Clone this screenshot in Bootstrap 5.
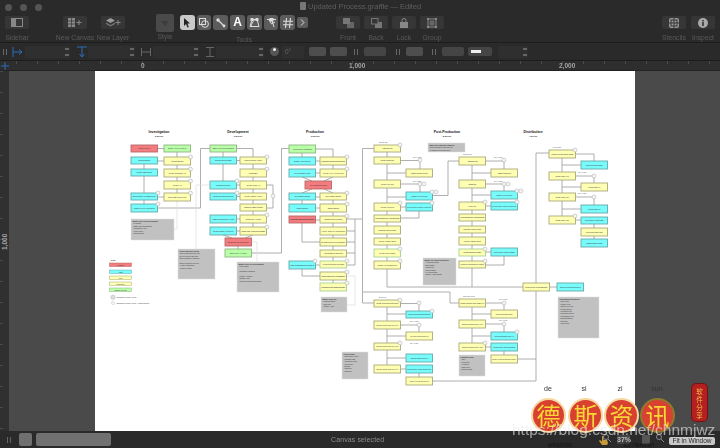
<!DOCTYPE html>
<html>
<head>
  <title>Updated Process.graffle</title>
  <link rel="stylesheet" href="https://cdn.jsdelivr.net/npm/bootstrap@5.3.0/dist/css/bootstrap.min.css">
  <style>
    html, body { height: 448px; overflow: hidden; background: #2a2a2a; }
    body { font-family: "Liberation Sans", Arial, sans-serif; }
    .app-shell { width: 720px; height: 448px; position: relative; filter: blur(.45px); }

    .title-bar { height: 14px; padding-left: 5px; position: relative; }
    .light { width: 7px; height: 7px; border-radius: 50%; background: #555; }
    .doc-title { position: absolute; left: 300px; top: 0; font-size: 7.5px; line-height: 13px; color: #5f5f5f; }
    .doc-icon { width: 6px; height: 8px; background: #777; border-radius: 1px; margin-right: 2px; display: inline-block; vertical-align: -1px; }

    .tool-bar { height: 29px; border-bottom: 1px solid #1d1d1d; position: relative; padding-left: 5px; }
    .tool-group { width: 24px; position: relative; display: flex; flex-direction: column; align-items: center; }
    .tool-btn { width: 24px; height: 13px; margin-top: 2px; background: #363636; border-radius: 2px; display: flex; align-items: center; justify-content: center; flex: none; }
    .tool-name { font-size: 6.8px; line-height: 7px; color: #5a5a5a; margin-top: 5px; white-space: nowrap; text-align: center; width: max-content; flex: none; }
    .style-well { width: 18px; height: 18px; background: #4a4a4a; border-radius: 2px; margin-top: 0; flex: none; }
    .pick-btn { width: 15px; height: 15px; border-radius: 3px; background: #5c5c5c; display: flex; align-items: center; justify-content: center; }
    .pick-btn.on { background: #c9c9c9; }
    .more-btn { width: 11px; height: 11px; border-radius: 2px; background: #5c5c5c; display: flex; align-items: center; justify-content: center; }

    .insp-bar { height: 18px; border-bottom: 1px solid #1d1d1d; padding-left: 3px; }
    .grip { width: 4px; height: 6px; border-left: 1px solid #666; border-right: 1px solid #666; }
    .insp-field { height: 12px; background: #2f2f2f; border-radius: 1px; position: relative; }
    .stepper { position: absolute; right: 1px; top: 2px; width: 4px; height: 8px; border-top: 2px solid #666; border-bottom: 2px solid #666; }
    .mini-btn { width: 17px; height: 9px; border-radius: 2px; background: #4e4e4e; }
    .mini-sel { width: 22px; height: 9px; border-radius: 2px; background: #454545; }

    .ruler-top { height: 10px; background: #2e2e2e; border-bottom: 1px solid #222; position: relative;
      background-image: repeating-linear-gradient(90deg, #4b4b4b 0 1px, transparent 1px 21px); background-position: 16px 0; background-size: 100% 3px; background-repeat: no-repeat; }
    .ruler-num { position: absolute; top: 1px; font-size: 6.5px; line-height: 8px; font-weight: 700; color: #a5a5a5; }
    .ruler-cross { position: absolute; left: 1px; top: 1px; width: 8px; height: 8px; }

    .work-area { height: 360px; background: #4a4a4a; }
    .ruler-left { width: 9px; background: #303030; position: relative;
      background-image: repeating-linear-gradient(180deg, #4b4b4b 0 1px, transparent 1px 21px); background-size: 3px 100%; background-repeat: no-repeat; }
    .ruler-side { position: absolute; left: -4px; top: 166px; font-size: 6.5px; font-weight: 700; color: #a5a5a5; transform: rotate(-90deg); width: 18px; text-align: center; }
    .paper { width: 540px; height: 360px; background: #fff; margin-left: 86px; }
    .paper svg { display: block; }
    .node-text { font-size: 1.9px; fill: #3a3a3a; text-anchor: middle; }
    .head-text { font-size: 3.4px; font-weight: 700; fill: #111; text-anchor: middle; }
    .sub-text { font-size: 2.2px; font-weight: 700; fill: #333; text-anchor: middle; }
    .note-text { font-size: 1.8px; fill: #333; }

    .status-bar { height: 17px; position: relative; padding-left: 7px; }
    .status-sq { width: 13px; height: 13px; background: #707070; border-radius: 2px; }
    .status-wide { width: 75px; height: 13px; background: #707070; border-radius: 2px; }
    .status-text { position: absolute; left: 331px; top: 3px; font-size: 7px; line-height: 11px; color: #8d8d8d; letter-spacing: .1px; }
    .zoom-box { position: absolute; left: 617px; top: 4px; width: 13px; height: 9px; background: #444; color: #bbb; font-size: 7px; line-height: 9px; text-align: center; font-weight: 700; }
    .zoom-drop { position: absolute; left: 642px; top: 4px; width: 8px; height: 9px; background: #555; border-radius: 1px; }
    .fit-btn { position: absolute; left: 669px; top: 6px; width: 46px; height: 8px; background: #c9c9c9; color: #2a2a2a; border-radius: 2px; font-size: 6.5px; line-height: 8px; text-align: center; }
    .tiny-dark { position: absolute; top: 12px; font-size: 4px; line-height: 4px; color: #111; font-family: "Noto Sans CJK SC", sans-serif; }

    .pin-word { position: absolute; top: 384px; font-size: 7px; line-height: 9px; color: #333; width: 30px; text-align: center; }
    .seal-ball { position: absolute; top: 398px; width: 35px; height: 35px; border-radius: 50%; background: #d8412f; border: 2px solid #f7d9a0;
      color: #f9d736; font-family: "Noto Sans CJK SC", sans-serif; font-size: 24px; line-height: 30px; text-align: center; }
    .seal-ball.dim { border-color: #8f7a2e; }
    .seal-tag { position: absolute; left: 691px; top: 383px; width: 17px; height: 39px; background: #b3201f; border: 1px solid #6d1514; border-radius: 5px;
      color: #f2c04a; font-family: "Noto Sans CJK SC", sans-serif; font-size: 6.5px; line-height: 8px; text-align: center; padding-top: 3px; }
    .water-url { position: absolute; left: 512px; top: 420px; font-size: 15.5px; line-height: 20px; color: rgba(235,235,235,.62); white-space: nowrap; }

    /* toolbar and strip spacing */
    .ms-new-canvas { margin-left: 34px; } .ms-new-layer { margin-left: 14px; }
    .ms-style { margin-left: 31px; width: 18px; }
    .ms-style .tight-name { margin-top: 1px; }
    .tools-wrap { margin-left: 6px; width: 128px; padding-top: 1px; }
    .tools-row { gap: 2px; }
    .tools-name { width: 128px; margin-top: 6px; }
    .glyph-a { font-size: 12px; line-height: 15px; }
    .ms-front { margin-left: 28px; } .ms-small { margin-left: 4px; }
    .ms-stencils { margin-left: 218px; } .ms-inspect { margin-left: 5px; }
    .insp-i1 { margin-left: 5px; } .f1 { width: 45px; margin-left: 2px; }
    .insp-i2 { margin-left: 7px; } .f2 { width: 47px; margin-left: 1px; }
    .insp-i3 { margin-left: 6px; } .f3 { width: 46px; margin-left: 2px; }
    .insp-i4 { margin-left: 7px; } .f4 { width: 48px; margin-left: 2px; }
    .insp-i5 { margin-left: 6px; } .f5 { width: 22px; margin-left: 3px; }
    .deg { display: block; font-size: 6.5px; line-height: 12px; padding-left: 3px; color: #666; }
    .m1 { margin-left: 5px; } .m2 { margin-left: 4px; }
    .g2 { margin-left: 7px; } .s1 { margin-left: 6px; }
    .g3 { margin-left: 10px; } .m3 { margin-left: 6px; }
    .g4 { margin-left: 9px; } .s2 { margin-left: 6px; }
    .s3 { margin-left: 4px; width: 24px; padding-left: 3px; }
    .line-sample { width: 10px; height: 3px; background: #eee; }
    .f6 { width: 30px; margin-left: 6px; }
    .num-a { left: 141px; } .num-b { left: 349px; } .num-c { left: 559px; }
    .hand-ico { position: absolute; left: 599px; top: 5px; }
    .lens-a { position: absolute; left: 603px; top: 3px; }
    .lens-b { position: absolute; left: 656px; top: 3px; }
    .tiny-1 { left: 548px; } .tiny-2 { left: 623px; }
    .p1 { left: 533px; } .p2 { left: 569px; } .p3 { left: 605px; } .p4 { left: 642px; }
    .b1 { left: 531px; } .b2 { left: 568px; } .b3 { left: 604px; } .b4 { left: 640px; }
  </style>
</head>
<body>
  <div class="app-shell">

    <!-- window title -->
    <div class="title-bar d-flex align-items-center gap-2">
      <span class="light"></span><span class="light"></span><span class="light"></span>
      <div class="doc-title"><span class="doc-icon"></span>Updated Process.graffle — Edited</div>
    </div>

    <!-- main toolbar -->
    <div class="tool-bar d-flex">
      <div class="tool-group">
        <div class="tool-btn"><svg width="12" height="9" viewBox="0 0 12 9"><rect x=".5" y=".5" width="11" height="8" fill="none" stroke="#888"/><rect x="1" y="1" width="4" height="7" fill="#888"/></svg></div>
        <div class="tool-name">Sidebar</div>
      </div>
      <div class="tool-group ms-new-canvas">
        <div class="tool-btn"><svg width="15" height="9" viewBox="0 0 15 9"><rect width="7" height="9" fill="#888"/><path d="M0 3h7M0 6h7M3.5 0v9" stroke="#363636" stroke-width=".7"/><path d="M11 2v5M8.5 4.500h5" stroke="#888"/></svg></div>
        <div class="tool-name">New Canvas</div>
      </div>
      <div class="tool-group ms-new-layer">
        <div class="tool-btn"><svg width="15" height="9" viewBox="0 0 15 9"><path d="M4.500 0 9 2.500 4.500 5 0 2.500z" fill="#999"/><path d="M0 4.500 4.500 7 9 4.500V6L4.500 8.500 0 6z" fill="#777"/><path d="M12 2v5M9.500 4.500h5" stroke="#888"/></svg></div>
        <div class="tool-name">New Layer</div>
      </div>
      <div class="tool-group ms-style">
        <div class="style-well d-flex justify-content-center align-items-center"><svg width="8" height="5" viewBox="0 0 8 5"><path d="M0 0h8L4 5z" fill="#3c3c3c"/></svg></div>
        <div class="tool-name tight-name">Style</div>
      </div>
      <div class="tools-wrap">
        <div class="d-flex align-items-center tools-row">
          <div class="pick-btn on"><svg width="8" height="10" viewBox="0 0 8 10"><path d="M1 0v8l2-2 1.500 3.500 1.300-.6L4.400 5.500H7z" fill="#222"/></svg></div>
          <div class="pick-btn"><svg width="10" height="10" viewBox="0 0 10 10" fill="none" stroke="#ddd"><rect x=".5" y=".5" width="6" height="6"/><circle cx="6" cy="6" r="3.400"/></svg></div>
          <div class="pick-btn"><svg width="10" height="10" viewBox="0 0 10 10"><path d="M2 2 8 8" stroke="#ddd" stroke-width="1.200"/><circle cx="2" cy="2" r="1.700" fill="#ddd"/><circle cx="8" cy="8" r="1.400" fill="#ddd"/></svg></div>
          <div class="pick-btn text-white fw-bold glyph-a">A</div>
          <div class="pick-btn"><svg width="11" height="10" viewBox="0 0 11 10" fill="none" stroke="#ddd"><path d="M3 1.500h5L10 8.500H1z"/><rect x="2" y=".5" width="2" height="2" fill="#ddd"/><rect x="7" y=".5" width="2" height="2" fill="#ddd"/><path d="M5.500 2c-2 2-3 4-3.500 6"/></svg></div>
          <div class="pick-btn"><svg width="11" height="10" viewBox="0 0 11 10" fill="none" stroke="#ddd"><path d="M1 1.500h9M5.500 1.500 8 9M3 1.500 5.500 6 9 4"/><rect x="4" y="0" width="3" height="3" fill="#ddd"/></svg></div>
          <div class="pick-btn"><svg width="10" height="10" viewBox="0 0 10 10" stroke="#ddd" stroke-width="1.100"><path d="M3.500 0 2.500 10M7.500 0 6.500 10M0 3.300h10M0 6.700h10"/></svg></div>
          <div class="more-btn"><svg width="5" height="7" viewBox="0 0 5 7" fill="none" stroke="#ddd"><path d="m1 .5 3 3-3 3"/></svg></div>
        </div>
        <div class="tool-name tools-name">Tools</div>
      </div>
      <div class="tool-group ms-front">
        <div class="tool-btn"><svg width="11" height="10" viewBox="0 0 11 10"><rect x="4" y="4" width="7" height="6" fill="#666"/><rect x="0" y="0" width="7" height="6" fill="#777"/></svg></div>
        <div class="tool-name">Front</div>
      </div>
      <div class="tool-group ms-small">
        <div class="tool-btn"><svg width="11" height="10" viewBox="0 0 11 10"><rect x="4" y="4" width="7" height="6" fill="#777"/><rect x=".5" y=".5" width="6.500" height="5.500" fill="#363636" stroke="#777"/></svg></div>
        <div class="tool-name">Back</div>
      </div>
      <div class="tool-group ms-small">
        <div class="tool-btn"><svg width="8" height="10" viewBox="0 0 8 10"><rect y="4" width="8" height="6" fill="#888"/><path d="M2 4V2.500a2 2 0 0 1 4 0V4" fill="none" stroke="#888"/></svg></div>
        <div class="tool-name">Lock</div>
      </div>
      <div class="tool-group ms-small">
        <div class="tool-btn"><svg width="10" height="10" viewBox="0 0 10 10"><rect x="1" y="1" width="8" height="8" fill="none" stroke="#888"/><rect x="2.500" y="2.500" width="5" height="5" fill="#666"/><path d="M0 0h2v2H0zM8 0h2v2H8zM0 8h2v2H0zM8 8h2v2H8z" fill="#888"/></svg></div>
        <div class="tool-name">Group</div>
      </div>
      <div class="tool-group ms-stencils">
        <div class="tool-btn"><svg width="10" height="10" viewBox="0 0 10 10"><rect width="10" height="10" rx="2" fill="#999"/><path d="M5 0v10M0 5h10" stroke="#363636"/><rect x="2" y="2" width="6" height="6" fill="none" stroke="#363636"/></svg></div>
        <div class="tool-name">Stencils</div>
      </div>
      <div class="tool-group ms-inspect">
        <div class="tool-btn"><svg width="10" height="10" viewBox="0 0 10 10"><circle cx="5" cy="5" r="5" fill="#aaa"/><rect x="4.200" y="4" width="1.600" height="4" fill="#333"/><rect x="4.200" y="2" width="1.600" height="1.400" fill="#333"/></svg></div>
        <div class="tool-name">Inspect</div>
      </div>
    </div>

    <!-- object inspector strip -->
    <div class="insp-bar d-flex align-items-center">
      <span class="grip"></span>
      <svg class="insp-i1" width="11" height="10" viewBox="0 0 11 10" fill="none" stroke="#2c6fb8"><path d="M1 0v10M1 5h9M7 2.500 10 5 7 7.500"/></svg>
      <div class="insp-field f1"><span class="stepper"></span></div>
      <svg class="insp-i2" width="10" height="12" viewBox="0 0 10 12" fill="none" stroke="#2c6fb8"><path d="M0 1h10M5 1v10M2.500 8 5 11l2.500-3"/></svg>
      <div class="insp-field f2"><span class="stepper"></span></div>
      <svg class="insp-i3" width="10" height="8" viewBox="0 0 10 8" fill="none" stroke="#666"><path d="M.5 0v8M9.500 0v8M.5 4h9"/></svg>
      <div class="insp-field f3"><span class="stepper"></span></div>
      <svg class="insp-i4" width="8" height="10" viewBox="0 0 8 10" fill="none" stroke="#666"><path d="M0 .5h8M0 9.500h8M4 0v10"/></svg>
      <div class="insp-field f4"><span class="stepper"></span></div>
      <svg class="insp-i5" width="9" height="9" viewBox="0 0 9 9"><circle cx="4.500" cy="4.500" r="4.500" fill="#555"/><circle cx="4.500" cy="2.500" r="1.500" fill="#eee"/></svg>
      <div class="insp-field f5"><span class="deg">0°</span></div>
      <div class="mini-btn m1"></div>
      <div class="mini-btn m2"></div>
      <span class="grip g2"></span>
      <div class="mini-sel s1"></div>
      <span class="grip g3"></span>
      <div class="mini-btn m3"></div>
      <span class="grip g4"></span>
      <div class="mini-sel s2"></div>
      <div class="mini-sel s3 d-flex align-items-center"><span class="line-sample"></span></div>
      <div class="insp-field f6"><span class="stepper"></span></div>
    </div>

    <!-- horizontal ruler -->
    <div class="ruler-top">
      <svg class="ruler-cross" viewBox="0 0 8 8" stroke="#2c6fb8"><path d="M4 0v8M0 4h8"/></svg>
      <span class="ruler-num num-a">0</span>
      <span class="ruler-num num-b">1,000</span>
      <span class="ruler-num num-c">2,000</span>
    </div>

    <!-- canvas -->
    <div class="work-area d-flex">
      <div class="ruler-left"><span class="ruler-side">1,000</span></div>
      <div class="paper"><svg id="chart" width="540" height="360" viewBox="95 71 540 360"></svg></div>
    </div>

    <!-- status bar -->
    <div class="status-bar d-flex align-items-center gap-1">
      <span class="grip me-1"></span>
      <span class="status-sq"></span>
      <span class="status-wide"></span>
      <div class="status-text">Canvas selected</div>
      <svg class="hand-ico" width="9" height="9" viewBox="0 0 9 9"><path d="M3 0h1.500v4H8l1 3-1 2H3L0 5l1-1 2 1.500z" fill="#c79a3a"/></svg>
      <svg class="lens-a" width="8" height="8" viewBox="0 0 8 8" fill="none" stroke="#888"><circle cx="3" cy="3" r="2.500"/><path d="m5 5 3 3"/></svg>
      <div class="zoom-box">37%</div>
      <div class="zoom-drop"></div>
      <svg class="lens-b" width="8" height="8" viewBox="0 0 8 8" fill="none" stroke="#888"><circle cx="3" cy="3" r="2.500"/><path d="m5 5 3 3"/></svg>
      <div class="fit-btn">Fit in Window</div>
      <div class="tiny-dark tiny-1">最新软件资讯</div>
      <div class="tiny-dark tiny-2">关注了解更多软件</div>
    </div>

    <!-- stamp over the page -->
    <span class="pin-word p1">de</span><span class="pin-word p2">si</span><span class="pin-word p3">zi</span><span class="pin-word p4">xun</span>
    <div class="seal-ball b1">德</div>
    <div class="seal-ball b2">斯</div>
    <div class="seal-ball b3">资</div>
    <div class="seal-ball b4 dim">讯</div>
    <div class="seal-tag">软<br>件<br>分<br>享</div>
    <div class="water-url">https://blog.csdn.net/chnmjwz</div>
  </div>

  <script src="https://cdn.jsdelivr.net/npm/bootstrap@5.3.0/dist/js/bootstrap.bundle.min.js"></script>
  <script>
    const tone = {
      y: ['#ffffb3', '#a9a97c'],
      c: ['#78fbfb', '#66a9a9'],
      g: ['#b8ffa8', '#8fb583'],
      r: ['#f47b7e', '#b36a6a'],
      l: ['#ffffb3', '#a6d098']
    };

    // x, y top, bottom, colour, label
    const nodes = [
      [131,145,152,'r','Market Project'],[164,145,152,'g','Basic Art Pre-Project'],[131,157,164,'c','Concept Sketch'],[164,157,165,'y','Concept Sketch'],
      [131,169,176,'c','Create Master Deck'],[164,169,177,'y','Create Character Art'],[164,181,189,'y','Create Art'],[131,193,200,'c','Environment Art Master Deck'],
      [164,193,201,'y','Print Master Deck Copy'],[131,204,212,'c','Master for Pre-Production'],
      [210,145,152,'g','Basic Art Pre-Development'],[210,157,164,'c','Concept Rules Update'],[240,157,164,'y','Concept Rules Art Dev'],[240,169,177,'y','Rules Base'],
      [210,181,189,'c','Playground Review'],[240,181,189,'y','Create Rules Art'],[210,193,200,'c','Create Playground Review'],[240,193,200,'y','Create Master Art Set'],
      [240,204,211,'y','Complete Master Manual'],[210,215,223,'c','Master Development Art Set'],[240,215,223,'y','Create Dev Art Set'],[210,227,235,'c','Create Design Art Review'],
      [240,227,235,'y','Create Final Art Set Review Stage'],[225,238,246,'r','Begin Prod. Review Round'],[225,249,257,'g','Start Prod. Art Pack'],
      [289,145,153,'g','Approval Pre-Production'],[289,157,165,'c','Update Art Reference'],[320,157,165,'y','Production Update and Schedule'],[289,169,177,'c','Pre-Production Plan'],
      [320,169,177,'y','Create Full Art Plan Set'],[305,181,189,'r','Pre-Production Round'],[289,193,200,'c','On-Location Shoots'],[320,193,200,'y','On-Location Shoots'],
      [289,204,212,'c','Studio Shoots'],[320,204,212,'y','Studio Shoots'],[289,216,223,'r','Review Daily Rushes and Prepare Schedule'],[320,216,223,'y','Organise Daily Rushes'],
      [320,227,235,'y','Art Dir. Sign For Completion'],[320,238,246,'y','Dir. DOP Review For Completion'],[320,250,257,'y','Art Department Schedule'],[320,261,268,'l','Art Request Sign-Off Stage'],
      [289,261,269,'c','Make Art Request & Review Final Art'],[320,272,280,'y','Create Master Deck For Distribution'],[320,283,291,'l','Final Camera and Master Sound Set'],
      [374,145,152,'y','Assemble Cut'],[374,157,164,'y','Create Rough Cut'],[406,169,177,'y','Master Rough Cut Dir'],[374,180,188,'y','Create Fine Cut'],[406,192,200,'c','Master Fine Cut Dir'],
      [374,203,211,'y','Create Final Cut'],[406,203,211,'c','Review and Approve Final Cut'],[374,215,222,'y','Final Grading and Audio Elements'],[374,226,234,'y','Complete Colour Grade'],
      [374,238,245,'y','Picture Master Build'],[374,249,257,'l','Create Final Master'],[374,261,269,'y','Master for Distribution'],
      [459,157,165,'y','Assemble Cut'],[491,169,177,'y','Master Rough Cut'],[459,180,188,'y','Rough Cut'],[491,191,199,'c','Master Fine Cut Dir'],[459,202,210,'y','Final Cut'],[491,202,210,'c','Review and Approve Final Cut'],
      [459,214,221,'y','Final Grading and Audio Elements'],[459,226,233,'y','Complete Colour Grade'],[459,237,245,'y','Picture Master Build'],[459,249,256,'l','Create Summary Master'],[491,248,256,'c','Review and Approve Master'],[459,261,268,'y','Complete Distribution Master'],
      [549,150,158,'y','Create Layout Mockup Pages'],[581,161,169,'c','Review Layout Mockup'],[549,172,180,'y','Create Page V1.0'],[581,183,191,'y','Review Page V1'],[549,193,201,'y','Create Page V2.0'],
      [581,205,213,'c','Review Page V2'],[549,216,224,'y','Create Page V3.0'],[581,217,224,'c','Review and Accept Page'],[581,228,236,'y','Final Test Pass Page'],[581,239,247,'c','Publish Source Page'],
      [523,283,291,'y','Define Deployment Standard'],[557,283,291,'c','Deployment Kits Released'],
      [459,299,307,'y','Create Playbook Copy Draft V0.1'],[491,310,318,'y','Review Playbook Copy'],[459,320,328,'y','Create Playbook Copy V1.0'],[491,332,340,'c','Review Playbook Copy V1'],
      [459,343,351,'y','Create Playbook Copy V2.0'],[491,343,351,'c','Review and Accept Playbook'],[491,355,363,'y','Define Final Guidelines Copy'],
      [374,300,307,'y','Create Group Event Concept'],[406,311,318,'c','Review Group Event Concept'],[374,321,329,'y','Create Group Item Kit V0.1'],[406,332,340,'y','Review Group Item Kit'],
      [374,343,350,'y','Create Group Item Kit V0.2'],[406,354,362,'c','Review Group Item V1'],[374,365,373,'y','Create Group Item Kit V1.0'],[406,365,373,'c','Review and Accept Group Item'],[406,377,385,'y','Define Final Event Kit']
    ];

    const lines = [
      [157,148.5,164,148.5],[177,152,177,157],[164,161,157,161],[177,165,177,169],[177,177,177,181],[177,189,177,193],[144,164,144,169],[144,176,144,193],[144,200,144,204],[164,197,157,197],
      [157,208,200.5,208,200.5,148.5,210,148.5],
      [237,148.5,253,148.5,253,157],[240,160.5,237,160.5],[223,152,223,157],[253,164,253,169],[253,177,253,181],[223,164,223,181],[240,185,237,185],[253,189,253,193],[240,196.5,237,196.5],
      [267,185,273,185,273,208,267,208],[253,200,253,204],[253,211,253,215],[240,219,237,219],[253,223,253,227],[240,231,237,231],[223,235,232,238],[253,235,245,238],[238,246,238,249],
      [251,253,281.5,253,281.5,148.5,289,148.5],
      [315,149,333,149,333,157],[302,153,302,157],[320,161,315,161],[333,165,333,169],[320,173,315,173],[302,177,312,181],[333,177,324,181],[312,189,302,193],[324,189,333,193],[320,197,315,197],
      [302,200,302,204],[333,200,333,204],[320,208,315,208],[333,212,333,216],[315,220,320,220],[333,223,333,227],[333,235,333,238],[333,246,333,250],[333,257,333,261],[315,265,320,265],
      [302,269,302,276,320,276],[333,280,333,283],[302,223,302,242,320,242],[347,219,362,219],[355,219,355,265,347,265],[347,231,355,231],[347,242,355,242],[347,253,355,253],
      [362.5,148.5,374,148.5],[362.5,148.5,362.5,303,374,303],
      [387,152,387,157],[400,160.5,420,160.5,420,169],[387,164,387,180],[387,173,406,173],[400,184,420,184,420,192],[387,188,387,203],[387,197,406,197],[400,207,406,207],[387,211,387,215],[387,222,387,226],
      [387,234,387,238],[387,245,387,249],[387,257,387,261],[387,269,387,287,523,287],[419,211,419,218,400,218],[432,195.5,448,195.5,448,161,459,161],
      [485,161,504,161,504,169],[472,165,472,180],[472,173,491,173],[485,184,504,184,504,191],[472,188,472,202],[472,195,491,195],[485,206,491,206],[472,210,472,214],[472,221,472,226],[472,233,472,237],
      [472,245,472,249],[485,252,491,252],[472,256,472,261],[485,265,504,265,504,256],[472,268,472,287],
      [536,381,536,153,549,153],[575,154,594,154,594,161],[562,158,562,172],[562,165,581,165],[575,176,594,176,594,183],[562,180,562,193],[562,187,581,187],[575,197,594,197,594,205],[562,201,562,216],[562,209,581,209],
      [575,220,581,220],[594,224,594,228],[594,236,594,239],[549,287,557,287],
      [363,292,450,292,450,303,459,303],[400,303.5,419,303.5,419,311],[387,307,387,321],[387,314,406,314],[400,325,419,325,419,332],[387,329,387,343],[387,336,406,336],[387,350,387,365],[387,358,406,358],
      [400,369,406,369],[419,373,419,377],[432,381,536,381],
      [485,303,504,303,504,310],[472,307,472,320],[472,314,491,314],[485,324,504,324,504,332],[472,328,472,343],[472,336,491,336],[485,347,491,347],[504,351,504,355],[517,359,536,359]
    ];

    // thin pale connectors to the notes
    const paleLines = [
      [177,201,177,229,174,229],[210,185,196,185,196,249],[251,242,257,242,257,262],[347,276,355,276,355,305,347,305]
    ];

    const notes = [
      [131,219,43,21,['Master Deck for Development','- Synopsis','- Basic Style Description','- Characters Arcs','- Color Script','- Sound Notes']],
      [178,249,37,30,['Decide who will review','each round and how long','the review will take and','how feedback is handled.','','Other Groups to Review','- Legal, Marketing','- Studio Heads']],
      [237,262,42,30,['Master Deck for Development','- Final Script','','- Schedule & Budget','','- Master Art Book','- Budget Final','- Sales and Marketing Notes']],
      [321,297,26,15,['Master Deck Set','- Camera Notes','- Shot List','- Master Audio']],
      [423,258,33,27,['Master for Post Deliverables','- Art Design Team','- Edit Master','- Sound Mix','- Color Master','- VFX Elements','- Master Audio Stems']],
      [428,143,37,9,['Make sure that each round of','approvals has a final sign-off','in addition to the schedule']],
      [558,297,41,41,['Deployment Resources','- Final Copy','- Master Files','- Source Kit Files','- Press Sheets','- Localised Kits','- Marketing Sheet','- Web Banner Set','- Documentation','- Manuals','- Web Links']],
      [459,355,26,21,['Playbook Copy','- Intro','- Principles','- Art Rules','- Page Style','- Sign-off Pack']],
      [342,352,26,27,['Event Details','- Dates and Venue','- Contact Lists','- Schedule Items','- Guest List','- Budget','- Catering','- Shipping']]
    ];

    const heads = [
      [159,'Investigation','2 weeks'],[238,'Development','2 weeks'],[315,'Production','3 Weeks'],[447,'Post-Production','8 weeks'],[533,'Distribution','4 weeks']
    ];

    // numbered review markers
    const marks = [
      [190.500,157],[190.500,169],[190.500,181],[190.500,193],[158,193],[158,204],[267,157],[267,169],[237,181],[237,193],[267,215],[267,227],[273,196],
      [347,157],[347,169],[347,193],[347,204],[347,216],[347,261],[347,272],[347,283],[315,261],
      [400,145],[420,160],[420,184],[424,184],[432,192],[436,192],[400,203],[432,203],[400,249],[400,261],
      [504,160],[504,184],[508,184],[517,191],[521,191],[485,202],[517,202],[485,249],[485,261],
      [575,150],[594,176],[594,197],[575,216],[419,303],[419,325],[400,343],[432,311],[504,303],[504,324],[517,332],[485,343],[400,300]
    ];

    const chart = document.getElementById('chart');
    let out = '';

    lines.forEach((l) => {
      out += `<polyline points="${l.join(' ')}" fill="none" stroke="#9a9a9a" stroke-width=".8"/>`;
    });
    paleLines.forEach((l) => {
      out += `<polyline points="${l.join(' ')}" fill="none" stroke="#dcdcdc" stroke-width=".7"/>`;
    });

    nodes.forEach(([x, top, bottom, kind, label]) => {
      const h = bottom - top;
      out += `<rect x="${x}" y="${top}" width="26.500" height="${h}" fill="${tone[kind][0]}" stroke="${tone[kind][1]}" stroke-width=".9"/>`;
      out += `<text class="node-text" x="${x + 13.25}" y="${top + h / 2 + .7}" textLength="${Math.min(24, label.length * .85)}">${label}</text>`;
    });

    notes.forEach(([x, y, w, h, rows]) => {
      out += `<rect x="${x}" y="${y}" width="${w}" height="${h}" fill="#c1c1c1" stroke="#dedede" stroke-width=".5"/>`;
      rows.forEach((row, i) => {
        out += `<text class="note-text" x="${x + 1.5}" y="${y + 3 + i * 2.4}"${i == 0 ? ' font-weight="700"' : ''}>${row}</text>`;
      });
    });

    heads.forEach(([x, name, span]) => {
      out += `<text class="head-text" x="${x}" y="132.500">${name}</text><text class="sub-text" x="${x}" y="137">${span}</text>`;
    });

    marks.forEach(([x, y]) => {
      out += `<circle cx="${x}" cy="${y}" r="2" fill="#f4f4f4" stroke="#999" stroke-width=".4"/>`;
    });

    // key, bottom left of the sheet
    out += `<text x="111" y="260.500" font-size="2.400" font-weight="700" fill="#222">Key</text>`;
    [[263,'r','Missing'],[270,'c','Asset'],[276,'y','WIP'],[282,'y','Reminder'],[288,'g','Toggle Review']].forEach(([y, kind, label]) => {
      out += `<rect x="109.500" y="${y}" width="22" height="3.600" fill="${tone[kind][0]}" stroke="${tone[kind][1]}" stroke-width=".5"/>`;
      out += `<text class="node-text" x="120.500" y="${y + 2.5}">${label}</text>`;
    });
    out += `<circle cx="113" cy="297.300" r="2.200" fill="#ddd" stroke="#aaa" stroke-width=".4"/><text class="note-text" x="116.500" y="298">Comment Files to review</text>`;
    out += `<circle cx="113" cy="303" r="1.600" fill="#f4f4f4" stroke="#bbb" stroke-width=".4"/><text class="note-text" x="116.500" y="303.700">Comment Files to review - Finals Section</text>`;

    // little branch captions
    [[413,158,'Rev. 1 Day'],[413,182,'Rev. 1 Day'],[494,158,'Rev. 1 Day'],[494,182,'Rev. 1 Day'],[578,173,'Rev. 1 Day'],[578,194,'Rev. 1 Day'],[499,300,'Rev. 1 Day'],[499,321,'Rev. 1 Day'],[410,322,'Rev. 1 Day'],[410,344,'Rev. 1 Day'],
      [379,143,'Rough Cut'],[463,155,'Rough Cut'],[553,148,'Web Page'],[379,298,'Event Kit'],[463,297,'Playbook Copy']].forEach(([x, y, label]) => {
      out += `<text x="${x}" y="${y}" font-size="1.800" fill="#555">${label}</text>`;
    });

    chart.innerHTML = out;
  </script>
</body>
</html>
